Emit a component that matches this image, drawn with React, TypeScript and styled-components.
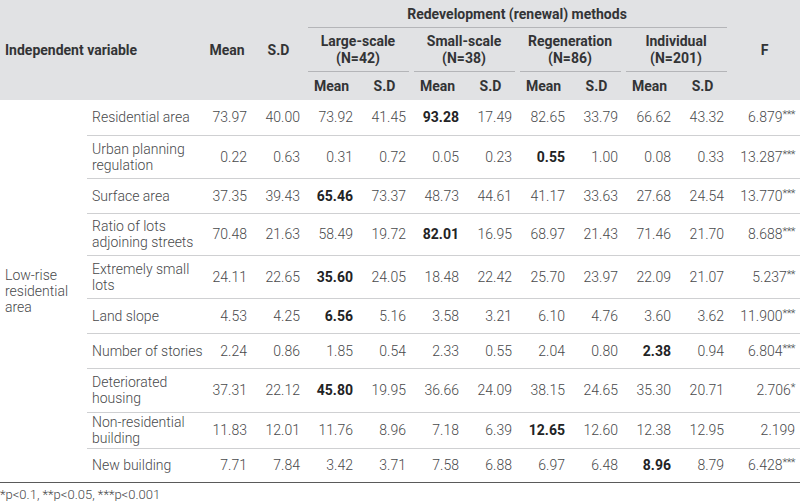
import React from "react";
import styled, { createGlobalStyle } from "styled-components";

const GlobalStyle = createGlobalStyle`
  html, body {
    margin: 0;
    padding: 0;
    background: #ffffff;
  }
  body {
    font-family: Roboto, "Liberation Sans", sans-serif;
  }
`;

const Page = styled.div`
  width: 800px;
  height: 501px;
  overflow: hidden;
`;

const Table = styled.table`
  width: 800px;
  table-layout: fixed;
  border-collapse: collapse;
  border-bottom: 1.5px solid #5a5a5a;
`;

const Head = styled.thead`
  background: #e1e2e4;
`;

const HeadRow = styled.tr<{ $h: number }>`
  height: ${(p) => p.$h}px;
`;

const Th = styled.th<{ $align?: string; $line?: boolean }>`
  padding: 0 5px;
  font-size: 14px;
  line-height: 17px;
  font-weight: 700;
  color: #333436;
  text-align: ${(p) => p.$align || "center"};
  vertical-align: middle;
  background-image: ${(p) =>
    p.$line ? "linear-gradient(#b4b5b8, #b4b5b8)" : "none"};
  background-repeat: no-repeat;
  background-size: calc(100% - 5px) 1px;
  background-position: 50% 100%;
`;

const Row = styled.tr<{ $h: number }>`
  height: ${(p) => p.$h}px;
`;

const GroupCell = styled.td`
  padding: 0 5px;
  font-size: 14px;
  line-height: 16px;
  font-weight: 300;
  color: #48494b;
  vertical-align: middle;
`;

const Td = styled.td<{ $bold?: boolean; $label?: boolean; $last?: boolean }>`
  padding: ${(p) => (p.$label ? "0 2px 0 5px" : "0 5px")};
  font-size: 14px;
  line-height: 16px;
  font-weight: ${(p) => (p.$bold ? 700 : 300)};
  color: ${(p) => (p.$bold ? "#222325" : "#48494b")};
  text-align: ${(p) => (p.$label ? "left" : "right")};
  white-space: pre;
  vertical-align: middle;
  border-bottom: ${(p) => (p.$last ? "none" : "1px solid #cfd0d2")};
`;

const Stars = styled.sup`
  font-size: 11px;
  line-height: 0;
  vertical-align: 4px;
  letter-spacing: -0.5px;
`;

const Note = styled.div`
  padding: 4px 0 0 0;
  font-size: 13px;
  line-height: 15px;
  font-weight: 300;
  color: #48494b;
`;

type DataRow = {
  label: string;
  values: string[];
  f: string;
  sig: string;
  bold: number;
  h: number;
};

const rows: DataRow[] = [
  { label: "Residential area", values: ["73.97", "40.00", "73.92", "41.45", "93.28", "17.49", "82.65", "33.79", "66.62", "43.32"], f: "6.879", sig: "***", bold: 4, h: 35 },
  { label: "Urban planning\nregulation", values: ["0.22", "0.63", "0.31", "0.72", "0.05", "0.23", "0.55", "1.00", "0.08", "0.33"], f: "13.287", sig: "***", bold: 6, h: 43 },
  { label: "Surface area", values: ["37.35", "39.43", "65.46", "73.37", "48.73", "44.61", "41.17", "33.63", "27.68", "24.54"], f: "13.770", sig: "***", bold: 2, h: 35 },
  { label: "Ratio of lots\nadjoining streets", values: ["70.48", "21.63", "58.49", "19.72", "82.01", "16.95", "68.97", "21.43", "71.46", "21.70"], f: "8.688", sig: "***", bold: 4, h: 42 },
  { label: "Extremely small\nlots", values: ["24.11", "22.65", "35.60", "24.05", "18.48", "22.42", "25.70", "23.97", "22.09", "21.07"], f: "5.237", sig: "**", bold: 2, h: 43 },
  { label: "Land slope", values: ["4.53", "4.25", "6.56", "5.16", "3.58", "3.21", "6.10", "4.76", "3.60", "3.62"], f: "11.900", sig: "***", bold: 2, h: 35 },
  { label: "Number of stories", values: ["2.24", "0.86", "1.85", "0.54", "2.33", "0.55", "2.04", "0.80", "2.38", "0.94"], f: "6.804", sig: "***", bold: 8, h: 35 },
  { label: "Deteriorated\nhousing", values: ["37.31", "22.12", "45.80", "19.95", "36.66", "24.09", "38.15", "24.65", "35.30", "20.71"], f: "2.706", sig: "*", bold: 2, h: 44 },
  { label: "Non-residential\nbuilding", values: ["11.83", "12.01", "11.76", "8.96", "7.18", "6.39", "12.65", "12.60", "12.38", "12.95"], f: "2.199", sig: "", bold: 6, h: 36 },
  { label: "New building", values: ["7.71", "7.84", "3.42", "3.71", "7.58", "6.88", "6.97", "6.48", "8.96", "8.79"], f: "6.428", sig: "***", bold: 8, h: 34 },
];

const groups = [
  ["Large-scale", "(N=42)"],
  ["Small-scale", "(N=38)"],
  ["Regeneration", "(N=86)"],
  ["Individual", "(N=201)"],
];

const widths = [87, 115, 50, 53, 53, 53, 53, 53, 53, 53, 53, 53, 71];

export default function App() {
  return (
    <Page>
      <GlobalStyle />
      <Table>
        <colgroup>
          {widths.map((w, i) => (
            <col key={i} style={{ width: w }} />
          ))}
        </colgroup>
        <Head>
          <HeadRow $h={28}>
            <Th colSpan={2} rowSpan={3} $align="left">
              Independent variable
            </Th>
            <Th rowSpan={3}>Mean</Th>
            <Th rowSpan={3}>S.D</Th>
            <Th colSpan={8} $line>
              Redevelopment (renewal) methods
            </Th>
            <Th rowSpan={3}>F</Th>
          </HeadRow>
          <HeadRow $h={44}>
            {groups.map(([name, n]) => (
              <Th key={name} colSpan={2} $line>
                {name}
                <br />
                {n}
              </Th>
            ))}
          </HeadRow>
          <HeadRow $h={28}>
            {groups.map(([name]) => (
              <React.Fragment key={name}>
                <Th>Mean</Th>
                <Th>S.D</Th>
              </React.Fragment>
            ))}
          </HeadRow>
        </Head>
        <tbody>
          {rows.map((r, i) => {
            const last = i === rows.length - 1;
            return (
              <Row key={r.label} $h={r.h}>
                {i === 0 && (
                  <GroupCell rowSpan={rows.length}>
                    Low-rise
                    <br />
                    residential
                    <br />
                    area
                  </GroupCell>
                )}
                <Td $label $last={last}>
                  {r.label}
                </Td>
                {r.values.map((v, j) => (
                  <Td key={j} $bold={j === r.bold} $last={last}>
                    {v}
                  </Td>
                ))}
                <Td $last={last}>
                  {r.f}
                  {r.sig && <Stars>{r.sig}</Stars>}
                </Td>
              </Row>
            );
          })}
        </tbody>
      </Table>
      <Note>*p&lt;0.1, **p&lt;0.05, ***p&lt;0.001</Note>
    </Page>
  );
}
